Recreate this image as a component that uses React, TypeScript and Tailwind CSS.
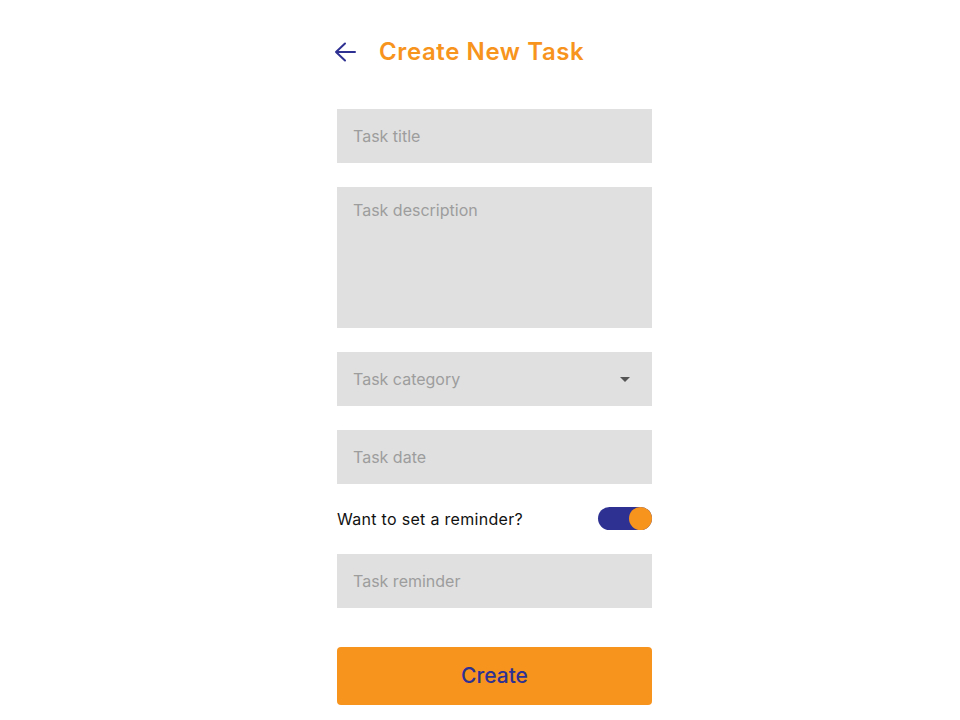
import { useState } from "react";

export default function App() {
  const [reminder, setReminder] = useState(true);

  const field =
    "w-full h-[54px] bg-[#e0e0e0] px-4 text-[16px] text-[#333] placeholder:text-[#9d9d9d] outline-0";

  return (
    <div className="min-h-screen bg-white flex justify-center pl-[29px] font-['Inter',sans-serif]">
      <div className="w-[315px] pt-[36px] flex flex-col">
        <div className="flex items-center h-[32px] -ml-[3px]">
          <button className="text-[#2e3192] w-[22px] h-[22px] flex items-center justify-center">
            <svg width="22" height="20" viewBox="0 0 22 20" fill="none">
              <path
                d="M21 10H2M11 1.5L2 10l9 8.5"
                stroke="currentColor"
                strokeWidth="2"
                strokeLinecap="round"
                strokeLinejoin="round"
              />
            </svg>
          </button>
          <h1 className="ml-[23px] text-[24px] font-semibold text-[#f7941d] tracking-[0.6px]">
            Create New Task
          </h1>
        </div>

        <div className="mt-[41px] flex flex-col gap-6">
          <input className={field} placeholder="Task title" />
          <textarea
            className="w-full h-[141px] bg-[#e0e0e0] px-4 pt-[11px] text-[16px] text-[#333] placeholder:text-[#9d9d9d] outline-0 resize-none"
            placeholder="Task description"
          />
          <div className="relative">
            <select
              defaultValue=""
              className="w-full h-[54px] bg-[#e0e0e0] px-4 text-[16px] text-[#9d9d9d] outline-0 appearance-none"
            >
              <option value="" disabled>
                Task category
              </option>
              <option>Work</option>
              <option>Personal</option>
            </select>
            <svg
              className="absolute right-[22px] top-[25px] pointer-events-none"
              width="10"
              height="5"
              viewBox="0 0 10 5"
            >
              <path d="M0 0h10L5 5z" fill="#555" />
            </svg>
          </div>
          <input className={field} placeholder="Task date" />
        </div>

        <div className="mt-[23px] flex items-center justify-between h-[23px]">
          <span className="text-[16px] text-[#111] tracking-[0.3px]">Want to set a reminder?</span>
          <button
            onClick={() => setReminder(!reminder)}
            className={`w-[54px] h-[23px] rounded-full flex items-center ${
              reminder ? "bg-[#2e3192] justify-end" : "bg-[#bdbdbd] justify-start"
            }`}
          >
            <span className="w-[23px] h-[23px] rounded-full bg-[#f7941d]" />
          </button>
        </div>

        <input className={`${field} mt-[24px]`} placeholder="Task reminder" />

        <button className="mt-[39px] h-[58px] w-full rounded-[4px] bg-[#f7941d] text-[21px] font-medium text-[#2e3192]">
          Create
        </button>
      </div>
    </div>
  );
}
